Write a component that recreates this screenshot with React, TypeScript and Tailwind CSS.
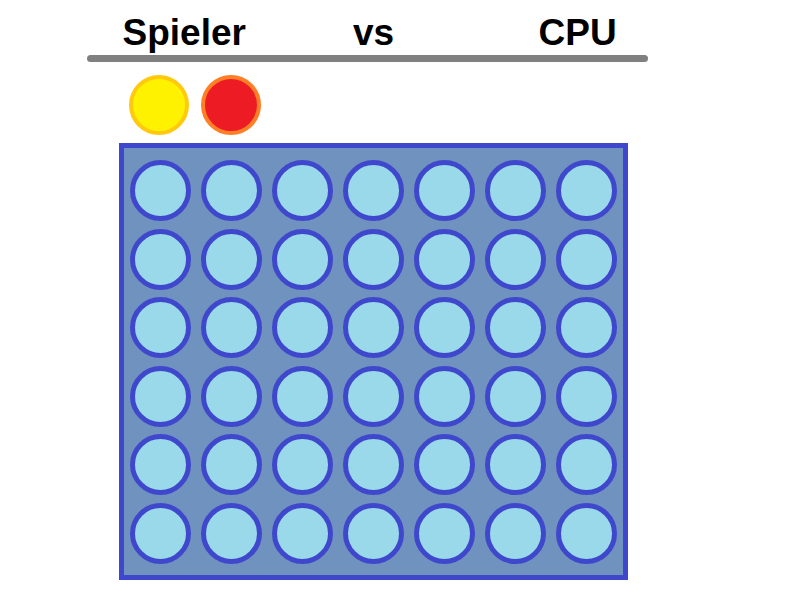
import React from "react";

export default function App() {
  const rows = Array.from({ length: 6 });
  const cols = Array.from({ length: 7 });
  return (
    <div
      className="w-[800px] h-[600px] bg-white overflow-hidden"
      style={{ fontFamily: '"Liberation Sans", Arial, sans-serif' }}
    >
      <div className="flex pt-[14.5px] text-[37px] leading-[36px] font-bold text-black">
        <span className="ml-[122.5px] w-[230.5px]">Spieler</span>
        <span className="w-[185.5px]">vs</span>
        <span>CPU</span>
      </div>
      <div className="ml-[87px] mt-[4.5px] w-[561px] h-[7px] rounded-full bg-[#808080]" />
      <div className="flex gap-[12px] ml-[129px] mt-[13px]">
        <div className="w-[60px] h-[60px] rounded-full bg-[#fff200] border-[4px] border-[#ffc90e]" />
        <div className="w-[60px] h-[60px] rounded-full bg-[#ed1c24] border-[4px] border-[#ff7f27]" />
      </div>
      <div className="ml-[119px] mt-[8px] w-[509px] h-[437px] border-[5px] border-[#3f48cc] bg-[#7092be] pl-[6px] pt-[12px]">
        <div className="flex flex-col gap-y-[7.6px]">
          {rows.map((_, r) => (
            <div key={r} className="flex gap-x-[10px]">
              {cols.map((_, c) => (
                <div
                  key={c}
                  className="w-[61px] h-[61px] rounded-full bg-[#99d9ea] border-[5px] border-[#3f48cc]"
                />
              ))}
            </div>
          ))}
        </div>
      </div>
    </div>
  );
}
